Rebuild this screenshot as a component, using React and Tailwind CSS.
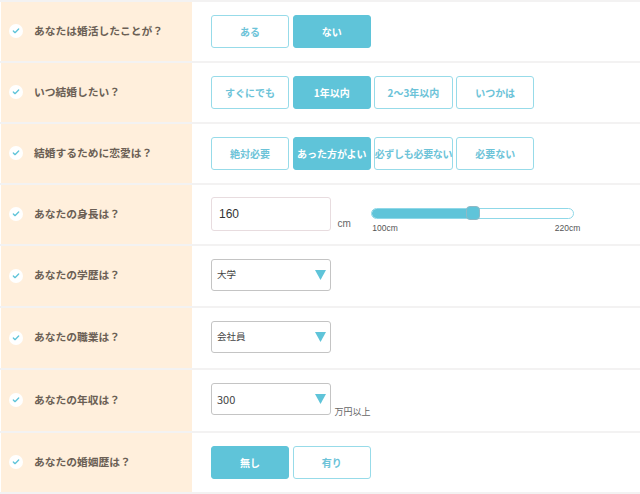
import { Check } from "lucide-react";

const font = "font-['Noto_Sans_CJK_JP','Liberation_Sans',sans-serif]";

function Btn({ label, on, tight }) {
    return (
        <div className={`w-[78.2px] h-[33px] flex items-center justify-center rounded-[3px] border-[1.5px] text-[10px] font-bold whitespace-nowrap ${on ? "bg-[#5fc4d9] border-[#5fc4d9] text-white" : "bg-white border-[#97dbe9] text-[#6cc3d8]"} ${tight ? "tracking-[-0.3px]" : ""}`}>
            {label}
        </div>
    );
}

function Select({ value, latin }) {
    return (
        <div className="w-[120px] h-[32px] mb-[3px] flex items-center justify-between pl-[5px] pr-[4px] bg-white border-[1.5px] border-[#c4c4c4] rounded-[3px]">
            <span className={`text-[#444] ${latin ? "text-[11px]" : "text-[9.5px]"}`}>{value}</span>
            <svg width="11" height="10" viewBox="0 0 11 10"><path d="M0 0h11L5.5 10z" fill="#5fc4d9" /></svg>
        </div>
    );
}

function Fila({ title, children, h }) {
    return (
        <div className={`flex border-b-2 border-[#f3f2f2] ${h}`}>
            <div className="w-[191px] ml-px pb-[1px] bg-[#ffefdc] flex items-center pl-[8px] gap-[11px]">
                <span className="w-[14px] h-[14px] rounded-full bg-white flex items-center justify-center">
                    <Check size={8} strokeWidth={4} className="text-[#5fc4d9]" />
                </span>
                <span className="text-[10.75px] font-bold text-[#6b5f55] whitespace-nowrap">{title}</span>
            </div>
            <div className="flex-1 flex items-center pl-[19px] gap-[3.5px]">{children}</div>
        </div>
    );
}

export default function App() {
    return (
        <div className={`w-[640px] h-[494px] overflow-hidden bg-white ${font}`}>
            <div className="h-[2px] bg-[#f3f2f2]" />
            <Fila title="あなたは婚活したことが？" h="h-[61px]">
                <Btn label="ある" />
                <Btn label="ない" on />
            </Fila>
            <Fila title="いつ結婚したい？" h="h-[61px]">
                <Btn label="すぐにでも" />
                <Btn label="1年以内" on />
                <Btn label="2〜3年以内" />
                <Btn label="いつかは" />
            </Fila>
            <Fila title="結婚するために恋愛は？" h="h-[61px]">
                <Btn label="絶対必要" />
                <Btn label="あった方がよい" on />
                <Btn label="必ずしも必要ない" tight />
                <Btn label="必要ない" />
            </Fila>
            <Fila title="あなたの身長は？" h="h-[61px]">
                <div className="w-[120px] h-[34px] mb-[1px] flex items-center pl-[7px] border-[1.5px] border-[#e8dcdf] rounded-[3px] text-[12px] text-[#333] font-['Liberation_Sans',sans-serif]">160</div>
                <span className="ml-[3px] mt-[17px] text-[10px] text-[#666] font-['Liberation_Sans',sans-serif]">cm</span>
                <div className="ml-[17px] mt-[13px] w-[209px] font-['Liberation_Sans',sans-serif]">
                    <div className="relative w-[203px] h-[11px] rounded-full border border-[#8fd8e8] bg-white">
                        <div className="w-[98px] h-full rounded-l-full bg-[#5fc4d9]" />
                        <div className="absolute left-[94px] top-[-3px] w-[14px] h-[14px] rounded-[4px] bg-[#5fc4d9] border border-[#8fb9c6]" />
                    </div>
                    <div className="flex justify-between pl-[1px] mt-[3px] text-[8.5px] text-[#555]">
                        <span>100cm</span>
                        <span>220cm</span>
                    </div>
                </div>
            </Fila>
            <Fila title="あなたの学歴は？" h="h-[62px]">
                <Select value="大学" />
            </Fila>
            <Fila title="あなたの職業は？" h="h-[62px]">
                <Select value="会社員" />
            </Fila>
            <Fila title="あなたの年収は？" h="h-[63px]">
                <Select value="300" latin />
                <span className="mt-[22px] text-[9px] text-[#666]">万円以上</span>
            </Fila>
            <Fila title="あなたの婚姻歴は？" h="h-[61px]">
                <Btn label="無し" on />
                <Btn label="有り" />
            </Fila>
        </div>
    );
}
